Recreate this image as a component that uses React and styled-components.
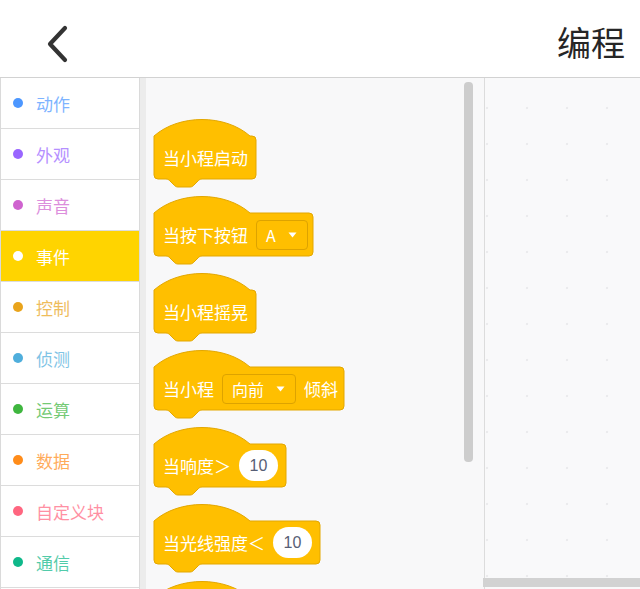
import React from "react";
import styled, { createGlobalStyle } from "styled-components";

const GlobalStyle = createGlobalStyle`
  html, body {
    margin: 0;
    padding: 0;
    background: #fff;
  }
  body {
    font-family: "Noto Sans CJK SC", "Noto Sans", sans-serif;
  }
`;

const Page = styled.div`
  width: 640px;
  height: 589px;
  display: flex;
  flex-direction: column;
  overflow: hidden;
`;

const Header = styled.header`
  height: 78px;
  flex-shrink: 0;
  box-sizing: border-box;
  display: flex;
  align-items: center;
  justify-content: space-between;
  padding: 10px 15px 0 44px;
  background: #fff;
  border-bottom: 1px solid #d2d2d2;
  box-shadow: 0 1px 2px rgba(0, 0, 0, 0.06);
`;

const Title = styled.h1`
  margin: 0 0 4px;
  font-size: 34px;
  font-weight: 400;
  color: #262626;
`;

const Body = styled.div`
  flex: 1;
  display: flex;
  min-height: 0;
`;

const Sidebar = styled.nav`
  width: 138px;
  flex-shrink: 0;
  display: flex;
  flex-direction: column;
  border-left: 1px solid #dadada;
  border-right: 1px solid #dadada;
`;

const Strip = styled.div`
  width: 6px;
  flex-shrink: 0;
  background: #ececec;
`;

const Item = styled.div`
  height: 50px;
  flex-shrink: 0;
  display: flex;
  align-items: center;
  gap: 13px;
  padding-left: 12px;
  border-bottom: 1px solid #dcdcdc;
  background: ${(p) => (p.$active ? "#FFD400" : "#fff")};
`;

const Dot = styled.span`
  width: 10px;
  height: 10px;
  border-radius: 50%;
  background: ${(p) => p.$color};
`;

const Label = styled.span`
  font-size: 17px;
  color: ${(p) => p.$color};
  opacity: ${(p) => (p.$active ? 1 : 0.72)};
`;

const Palette = styled.div`
  position: relative;
  width: 339px;
  flex-shrink: 0;
  background: #f8f8f9;
  border-right: 1px solid #dcdcdc;
  padding: 42px 0 0 8px;
  box-sizing: border-box;
  display: flex;
  flex-direction: column;
  gap: 11px;
  overflow: hidden;
`;

const VScroll = styled.div`
  position: absolute;
  top: 4px;
  left: 318px;
  width: 9px;
  height: 380px;
  border-radius: 4px;
  background: #cdcdcd;
`;

const Canvas = styled.div`
  position: relative;
  flex: 1;
  background-color: #f9f9fa;
  background-image: radial-gradient(circle, #ebebed 1px, transparent 1.6px);
  background-size: 40px 36px;
  background-position: 22px 12px;
`;

const HScroll = styled.div`
  position: absolute;
  left: -2px;
  right: 0;
  bottom: 2px;
  height: 9px;
  background: #d2d2d2;
`;

const BlockWrap = styled.div`
  position: relative;
  flex-shrink: 0;
  width: ${(p) => p.$w}px;
  height: 66px;
`;

const BlockShape = styled.svg`
  position: absolute;
  left: -1px;
  top: -1px;
  overflow: visible;
`;

const BlockRow = styled.div`
  position: relative;
  margin-top: 16px;
  height: 43px;
  display: flex;
  align-items: center;
  gap: 8px;
  padding: 0 8px 0 9px;
  font-size: 17px;
  color: #fff;
  white-space: nowrap;
`;

const Dropdown = styled.span`
  height: 30px;
  box-sizing: border-box;
  display: flex;
  align-items: center;
  gap: 12px;
  padding: 0 10px 0 9px;
  border: 1px solid #dda300;
  border-radius: 4px;
  background: #ffbf00;
  font-size: 16px;
  color: #fff;
`;

const Oval = styled.span`
  width: 40px;
  height: 31px;
  border-radius: 16px;
  background: #fff;
  display: flex;
  align-items: center;
  justify-content: center;
  font-family: "Liberation Sans", Arial, sans-serif;
  font-size: 16px;
  color: #575e75;
`;

function hatPath(w) {
  const b = 43;
  const t = 16;
  const bt = t + b;
  return `M 0,${t} c 25,-22 71,-22 96,0 H ${w - 4} a 4,4 0 0 1 4,4 V ${bt - 4} a 4,4 0 0 1 -4,4 H 48 c -2,0 -3,1 -4,2 l -4,4 c -1,1 -2,2 -4,2 h -12 c -2,0 -3,-1 -4,-2 l -4,-4 c -1,-1 -2,-2 -4,-2 H 4 a 4,4 0 0 1 -4,-4 Z`;
}

function Hat({ w, children }) {
  return (
    <BlockWrap $w={w}>
      <BlockShape width={w + 2} height={70}>
        <path d={hatPath(w)} transform="translate(1,1)" fill="#FFBF00" stroke="#E3A700" strokeWidth="1" />
      </BlockShape>
      {children && <BlockRow>{children}</BlockRow>}
    </BlockWrap>
  );
}

function Caret() {
  return (
    <svg width="9" height="6" viewBox="0 0 9 6">
      <path d="M0.5 0.5 H8.5 L4.5 5.5 Z" fill="#fff" />
    </svg>
  );
}

const categories = [
  { name: "动作", color: "#4C97FF" },
  { name: "外观", color: "#9966FF" },
  { name: "声音", color: "#CF63CF" },
  { name: "事件", color: "#FFBF00", active: true },
  { name: "控制", color: "#E9A41C" },
  { name: "侦测", color: "#4FAEDC" },
  { name: "运算", color: "#3FB63F" },
  { name: "数据", color: "#FF8C1A" },
  { name: "自定义块", color: "#FF6680" },
  { name: "通信", color: "#0FB88A" },
];

export default function App() {
  return (
    <Page>
      <GlobalStyle />
      <Header>
        <svg width="30" height="40" viewBox="0 0 30 40">
          <path d="M21 4 L6 20 L21 36" fill="none" stroke="#333" strokeWidth="4.2" strokeLinecap="round" strokeLinejoin="round" />
        </svg>
        <Title>编程</Title>
      </Header>
      <Body>
        <Sidebar>
          {categories.map((c) => (
            <Item key={c.name} $active={c.active}>
              <Dot $color={c.active ? "#fff" : c.color} />
              <Label $color={c.active ? "#fff" : c.color} $active={c.active}>
                {c.name}
              </Label>
            </Item>
          ))}
        </Sidebar>
        <Strip />
        <Palette>
          <Hat w={102}>当小程启动</Hat>
          <Hat w={159}>
            当按下按钮
            <Dropdown>
              A <Caret />
            </Dropdown>
          </Hat>
          <Hat w={102}>当小程摇晃</Hat>
          <Hat w={190}>
            当小程
            <Dropdown>
              向前 <Caret />
            </Dropdown>
            倾斜
          </Hat>
          <Hat w={132}>
            当响度＞
            <Oval>10</Oval>
          </Hat>
          <Hat w={166}>
            当光线强度＜
            <Oval>10</Oval>
          </Hat>
          <Hat w={150} />
          <VScroll />
        </Palette>
        <Canvas>
          <HScroll />
        </Canvas>
      </Body>
    </Page>
  );
}
